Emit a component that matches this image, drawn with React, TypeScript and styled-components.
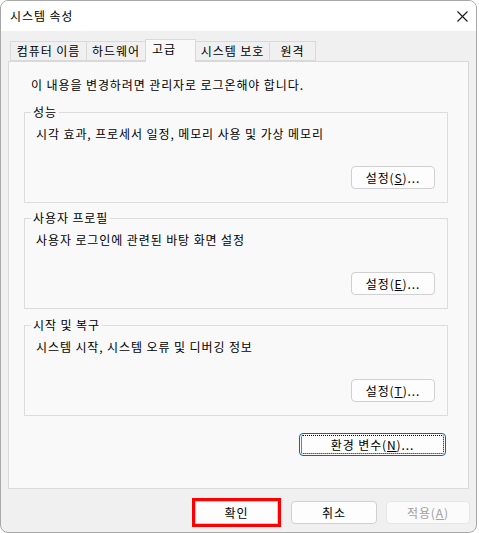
import * as React from "react";
import styled, {createGlobalStyle} from 'styled-components';

const Global = createGlobalStyle`
  html, body {
    margin: 0;
    padding: 0;
    background: #ffffff;
  }
  body {
    font-family: "Noto Sans CJK KR", "Noto Sans", sans-serif;
    font-size: 12px;
    letter-spacing: 0.9px;
    color: #000;
  }
`

const Window = styled.div`
  width: 477px;
  height: 533px;
  box-sizing: border-box;
  border: 1px solid #a8a8a8;
  border-radius: 8px;
  overflow: hidden;
  display: flex;
  flex-direction: column;
  background: #f0f0f0;
`

const TitleBar = styled.div`
  height: 30px;
  flex: none;
  background: #ffffff;
  display: flex;
  align-items: center;
  justify-content: space-between;
  padding-left: 9px;
  line-height: 14px;
`

const CloseBtn = styled.div`
  width: 27px;
  height: 30px;
  display: flex;
  align-items: center;
  justify-content: center;
  flex: none;
`

const Body = styled.div`
  flex: 1;
  display: flex;
  flex-direction: column;
  padding: 8px 0 0 7px;
`

const TabStrip = styled.div`
  height: 22px;
  display: flex;
  align-items: flex-end;
  padding-left: 2px;
  position: relative;
  z-index: 1;
`

const Tab = styled.div<{w: number; sel?: boolean; pr?: number}>`
  width: ${p => p.w}px;
  box-sizing: border-box;
  height: ${p => p.sel ? 23 : 20}px;
  margin-bottom: ${p => p.sel ? -1 : 0}px;
  margin-left: -1px;
  border: 1px solid #d9d9d9;
  border-bottom: ${p => p.sel ? 'none' : '1px solid #d9d9d9'};
  background: ${p => p.sel ? '#f9f9f9' : '#f0f0f0'};
  display: flex;
  justify-content: center;
  align-items: ${p => p.sel ? 'flex-start' : 'center'};
  padding-top: ${p => p.sel ? 2 : 0}px;
  padding-right: ${p => p.pr || 0}px;
  line-height: 14px;
  white-space: nowrap;
  position: relative;
  z-index: ${p => p.sel ? 2 : 1};
  &:first-child {
    margin-left: 0;
  }
`

const Panel = styled.div`
  width: 461px;
  height: 428px;
  box-sizing: border-box;
  border: 1px solid #d9d9d9;
  background: #f9f9f9;
  padding: 16px 0 0 15px;
  display: flex;
  flex-direction: column;
`

const Intro = styled.div`
  line-height: 14px;
  padding-left: 7px;
`

const Group = styled.div<{mt: number}>`
  width: 424px;
  box-sizing: border-box;
  margin-top: ${p => p.mt}px;
  border: 1px solid #dcdcdc;
  padding: 0 12px 13px 11px;
  display: flex;
  flex-direction: column;
`

const Legend = styled.span`
  align-self: flex-start;
  margin: -8px 0 0 -5px;
  padding: 0 2px;
  background: #f9f9f9;
  line-height: 14px;
`

const Desc = styled.div`
  margin-top: 8px;
  line-height: 14px;
`

const BtnRow = styled.div<{mt: number; pr?: number}>`
  display: flex;
  justify-content: flex-end;
  margin-top: ${p => p.mt}px;
  padding-right: ${p => p.pr || 0}px;
`

const Btn = styled.div<{w: number; focus?: boolean; off?: boolean; mark?: boolean}>`
  width: ${p => p.w}px;
  height: 23px;
  box-sizing: border-box;
  border: 1px solid ${p => p.focus ? '#0067c0' : p.off ? '#e5e5e5' : '#d0d0d0'};
  border-radius: ${p => p.mark ? 0 : 4}px;
  background: ${p => p.off ? '#fbfbfb' : '#fdfdfd'};
  color: ${p => p.off ? '#a0a0a0' : '#000'};
  display: flex;
  align-items: center;
  justify-content: center;
  line-height: 14px;
  white-space: nowrap;
  outline: ${p => p.focus ? '1px dotted #000' : p.mark ? '3px solid #ff0000' : 'none'};
  outline-offset: ${p => p.focus ? '-3px' : '0'};
  margin-right: ${p => p.mark ? 4 : 0}px;
`

const Footer = styled.div`
  display: flex;
  justify-content: flex-end;
  padding: 12px 6px 0 0;
  gap: 9px;
`

const App = () => {
    return (
        <>
            <Global/>
            <Window>
                <TitleBar>
                    <span>시스템 속성</span>
                    <CloseBtn>
                        <svg width="11" height="11" viewBox="0 0 11 11">
                            <path d="M0.5 0.5 L10.5 10.5 M10.5 0.5 L0.5 10.5" stroke="#1a1a1a" strokeWidth="1.1" fill="none"/>
                        </svg>
                    </CloseBtn>
                </TitleBar>
                <Body>
                    <TabStrip>
                        <Tab w={77}>컴퓨터 이름</Tab>
                        <Tab w={60}>하드웨어</Tab>
                        <Tab w={51} sel pr={13}>고급</Tab>
                        <Tab w={75}>시스템 보호</Tab>
                        <Tab w={47}>원격</Tab>
                    </TabStrip>
                    <Panel>
                        <Intro>이 내용을 변경하려면 관리자로 로그온해야 합니다.</Intro>

                        <Group mt={20}>
                            <Legend>성능</Legend>
                            <Desc>시각 효과, 프로세서 일정, 메모리 사용 및 가상 메모리</Desc>
                            <BtnRow mt={25}>
                                <Btn w={84}>설정(<u>S</u>)...</Btn>
                            </BtnRow>
                        </Group>

                        <Group mt={15}>
                            <Legend>사용자 프로필</Legend>
                            <Desc>사용자 로그인에 관련된 바탕 화면 설정</Desc>
                            <BtnRow mt={25}>
                                <Btn w={84}>설정(<u>E</u>)...</Btn>
                            </BtnRow>
                        </Group>

                        <Group mt={16}>
                            <Legend>시작 및 복구</Legend>
                            <Desc>시스템 시작, 시스템 오류 및 디버깅 정보</Desc>
                            <BtnRow mt={25}>
                                <Btn w={84}>설정(<u>T</u>)...</Btn>
                            </BtnRow>
                        </Group>

                        <BtnRow mt={17} pr={22}>
                            <Btn w={147} focus>환경 변수(<u>N</u>)...</Btn>
                        </BtnRow>
                    </Panel>
                    <Footer>
                        <Btn w={83} mark>확인</Btn>
                        <Btn w={86}>취소</Btn>
                        <Btn w={84} off>적용(<u>A</u>)</Btn>
                    </Footer>
                </Body>
            </Window>
        </>
    )
}

export default App;
